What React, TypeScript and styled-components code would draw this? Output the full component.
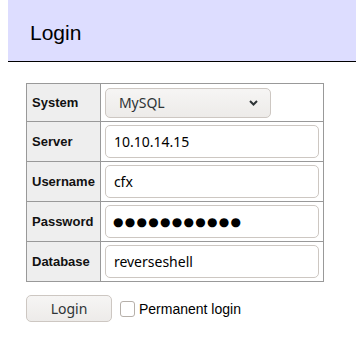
import React, { FC } from "react";
import styled, { createGlobalStyle } from "styled-components";

const GlobalStyle = createGlobalStyle`
  html, body {
    margin: 0;
    padding: 0;
    background: #fff;
  }
  body {
    font-family: "Liberation Sans", Arial, sans-serif;
    color: #000;
  }
`;

const Page = styled.div`
  padding-left: 8px;
`;

const Header = styled.h2`
  margin: 0;
  height: 24px;
  padding: 21px 0 16px 22px;
  background: #ddf;
  border-bottom: 1px solid #000;
  font-family: "Liberation Sans", Arial, sans-serif;
  font-weight: normal;
  font-size: 21px;
  line-height: 24px;
`;

const Content = styled.div`
  padding: 21px 0 0 18px;
`;

const Form = styled.form`
  margin: 0;
`;

const Table = styled.table`
  border-collapse: collapse;
  border: 1px solid #999;
  width: 295px;
`;

const Row = styled.tr<{ $height: number }>`
  height: ${(p) => p.$height}px;
`;

const Label = styled.th`
  width: 60px;
  padding: 0 5px;
  background: #eee;
  border: 1px solid #999;
  text-align: left;
  font-weight: bold;
  font-size: 13px;
  color: #111;
  white-space: nowrap;
`;

const Cell = styled.td`
  padding: 0 4px;
  border: 1px solid #999;
`;

const Input = styled.input<{ $masked?: boolean }>`
  display: block;
  box-sizing: border-box;
  width: 214px;
  height: 33px;
  margin: 0;
  padding: 0 ${(p) => (p.$masked ? "7px" : "8px")};
  border: 1px solid #cdc7c2;
  border-radius: 5px;
  background: #fff;
  font-family: ${(p) => (p.$masked ? '"DejaVu Sans", sans-serif' : '"Noto Sans", sans-serif')};
  font-size: ${(p) => (p.$masked ? "12px" : "14px")};
  letter-spacing: ${(p) => (p.$masked ? "1.3px" : "normal")};
  color: #000;
  outline: none;
`;

const SelectBox = styled.div`
  position: relative;
  width: 166px;
`;

const Select = styled.select`
  display: block;
  box-sizing: border-box;
  width: 166px;
  height: 30px;
  margin: 0;
  padding: 0 0 0 13px;
  border: 1px solid #cdc7c2;
  border-radius: 5px;
  background: linear-gradient(#f6f5f4, #edebe9);
  appearance: none;
  font-family: "Noto Sans", sans-serif;
  font-size: 14px;
  color: #2e3436;
  outline: none;
`;

const Chevron = styled.svg`
  position: absolute;
  top: 12px;
  right: 13px;
  pointer-events: none;
`;

const Actions = styled.div`
  display: flex;
  align-items: center;
  gap: 8px;
  margin-top: 13px;
`;

const Button = styled.button`
  box-sizing: border-box;
  width: 86px;
  height: 27px;
  padding: 0;
  border: 1px solid #cdc7c2;
  border-radius: 5px;
  background: linear-gradient(#f6f5f4, #edebe9);
  font-family: "Noto Sans", sans-serif;
  font-size: 14px;
  color: #2e3436;
`;

const Check = styled.label`
  display: flex;
  align-items: center;
  gap: 4px;
  font-size: 14px;
`;

const Box = styled.span`
  box-sizing: border-box;
  width: 15px;
  height: 16px;
  border: 1px solid #b6b0aa;
  border-radius: 3px;
  background: #fff;
`;

const fields = [
  { label: "Server", value: "10.10.14.15" },
  { label: "Username", value: "cfx" },
  { label: "Password", value: "●●●●●●●●●●●", masked: true },
  { label: "Database", value: "reverseshell" },
];

const App: FC = () => (
  <Page>
    <GlobalStyle />
    <Header>Login</Header>
    <Content>
      <Form>
        <Table>
          <tbody>
            <Row $height={38}>
              <Label>System</Label>
              <Cell>
                <SelectBox>
                  <Select defaultValue="server">
                    <option value="server">MySQL</option>
                  </Select>
                  <Chevron width="9" height="6" viewBox="0 0 9 6">
                    <path d="M1 1 L4.5 4.5 L8 1" fill="none" stroke="#2e3436" strokeWidth="2" />
                  </Chevron>
                </SelectBox>
              </Cell>
            </Row>
            {fields.map((f) => (
              <Row $height={40} key={f.label}>
                <Label>{f.label}</Label>
                <Cell>
                  <Input type="text" defaultValue={f.value} $masked={f.masked} />
                </Cell>
              </Row>
            ))}
          </tbody>
        </Table>
        <Actions>
          <Button type="button">Login</Button>
          <Check>
            <Box />
            Permanent login
          </Check>
        </Actions>
      </Form>
    </Content>
  </Page>
);

export default App;
